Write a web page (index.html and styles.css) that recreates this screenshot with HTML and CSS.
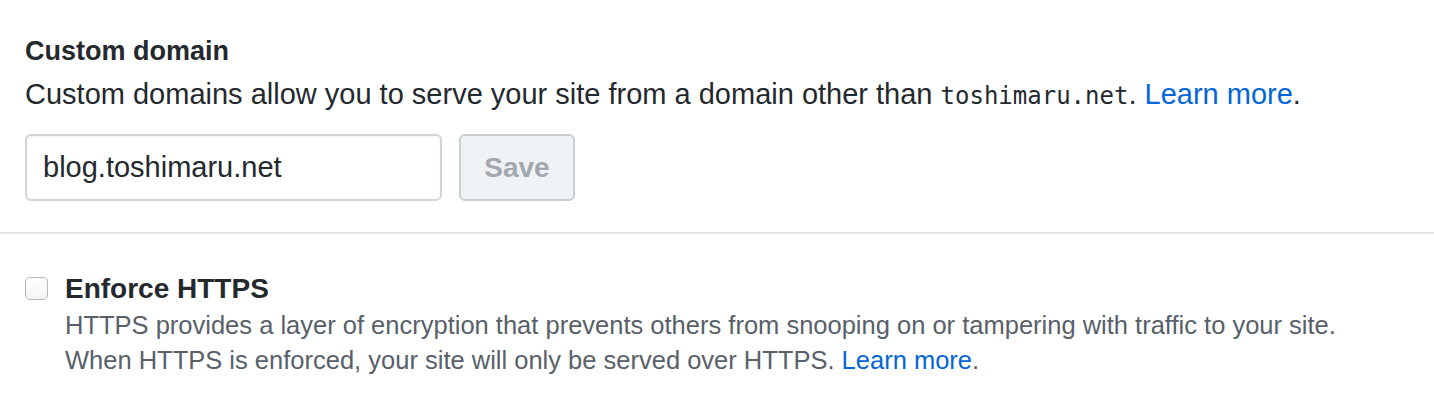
FILE: index.html
```html
<!DOCTYPE html>
<html>
<head>
<meta charset="utf-8">
<link rel="stylesheet" href="styles.css">
</head>
<body>
<section class="domain">
  <h3 class="title">Custom domain</h3>
  <p class="desc">Custom domains allow you to serve your site from a domain other than <code>toshimaru.net</code>. <a href="#">Learn more</a>.</p>
  <form class="domain-form">
    <input class="domain-input" type="text" value="blog.toshimaru.net">
    <button class="save-btn" type="button" disabled>Save</button>
  </form>
</section>
<hr class="divider">
<section class="https">
  <label class="check-row">
    <span class="checkbox"></span>
    <span class="check-body">
      <span class="check-title">Enforce HTTPS</span>
      <span class="check-note">HTTPS provides a layer of encryption that prevents others from snooping on or tampering with traffic to your site.<br>When HTTPS is enforced, your site will only be served over HTTPS. <a href="#">Learn more</a>.</span>
    </span>
  </label>
</section>
</body>
</html>
```

FILE: styles.css
```css
html, body {
  margin: 0;
  padding: 0;
  background: #ffffff;
}
body {
  font-family: "Liberation Sans", Arial, sans-serif;
  color: #24292e;
  width: 1434px;
  height: 408px;
  overflow: hidden;
}
a {
  color: #0366d6;
  text-decoration: none;
}
.domain {
  padding: 35px 25px 0 25px;
}
.title {
  margin: 0;
  font-size: 27px;
  font-weight: bold;
  line-height: 32px;
}
.desc {
  margin: 10px 0 0 0;
  font-size: 29px;
  line-height: 34px;
}
.desc code {
  font-family: "DejaVu Sans Mono", "Liberation Mono", monospace;
  font-size: 24px;
}
.domain-form {
  display: flex;
  gap: 17px;
  margin-top: 21px;
}
.domain-input {
  box-sizing: border-box;
  width: 417px;
  height: 67px;
  border: 2px solid #d1d5da;
  border-radius: 6px;
  padding: 0 16px;
  font-family: "Liberation Sans", Arial, sans-serif;
  font-size: 29px;
  color: #24292e;
  background: #fff;
  box-shadow: inset 0 1px 2px rgba(27,31,35,0.05);
  outline: none;
}
.save-btn {
  box-sizing: border-box;
  width: 116px;
  height: 67px;
  border: 2px solid #c9ced3;
  border-radius: 6px;
  background: #eff3f6;
  color: #a2a8ae;
  font-family: "Liberation Sans", Arial, sans-serif;
  font-size: 28px;
  font-weight: bold;
  padding: 0;
}
.divider {
  margin: 31px 0 0 0;
  border: 0;
  height: 2px;
  background: #e1e4e8;
}
.https {
  padding: 39px 25px 0 25px;
}
.check-row {
  display: flex;
  gap: 17px;
  align-items: flex-start;
}
.checkbox {
  box-sizing: border-box;
  flex: none;
  width: 23px;
  height: 23px;
  margin-top: 4px;
  border: 1.5px solid #b5b5b5;
  border-radius: 5px;
  background: linear-gradient(#ffffff, #f4f4f4);
}
.check-body {
  display: flex;
  flex-direction: column;
}
.check-title {
  font-size: 28px;
  font-weight: bold;
  line-height: 32px;
}
.check-note {
  margin-top: 3px;
  font-size: 25.5px;
  line-height: 35px;
  color: #586069;
}
```
